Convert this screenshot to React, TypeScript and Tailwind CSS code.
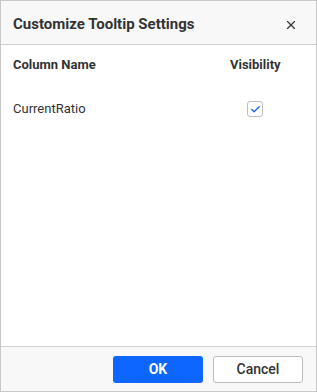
import { Check, X } from 'lucide-react';

export default function App() {
  return (
    <div
      className="w-[317px] h-[392px] flex flex-col border border-[#c8c8c8] bg-white text-[#333]"
      style={{ fontFamily: 'Roboto, "Liberation Sans", sans-serif' }}
    >
      {/* header */}
      <div className="h-[44px] shrink-0 flex items-center justify-between bg-[#f8f8f8] border-b border-[#d0d0d0] pl-[12px] pr-[18px] pt-[4px]">
        <span className="text-[15px] font-bold text-[#333]">Customize Tooltip Settings</span>
        <X size={14} strokeWidth={2} className="text-[#333]" />
      </div>

      {/* body */}
      <div className="flex-1 px-[12px]">
        <div className="flex items-center justify-between h-[40px] text-[13px] font-bold text-[#333]">
          <span>Column Name</span>
          <span className="w-[50px] mr-[24px] text-center">Visibility</span>
        </div>
        <div className="flex items-center justify-between h-[48px] text-[13px] text-[#333]">
          <span>CurrentRatio</span>
          <span className="w-[50px] mr-[24px] flex justify-center">
            <span className="w-[16px] h-[16px] rounded-[3px] border border-[#bdbdbd] flex items-center justify-center bg-white">
              <Check size={11} strokeWidth={3} className="text-[#1a66ff]" />
            </span>
          </span>
        </div>
      </div>

      {/* footer */}
      <div className="h-[45px] shrink-0 flex items-center justify-end gap-[10px] bg-[#f8f8f8] border-t border-[#d0d0d0] pr-[13px]">
        <button className="w-[90px] h-[27px] rounded-[3px] bg-[#0d66ff] text-white text-[14px] font-bold">OK</button>
        <button className="w-[90px] h-[27px] rounded-[3px] bg-white border border-[#bdbdbd] text-[#333] text-[14px] font-medium">
          Cancel
        </button>
      </div>
    </div>
  );
}
